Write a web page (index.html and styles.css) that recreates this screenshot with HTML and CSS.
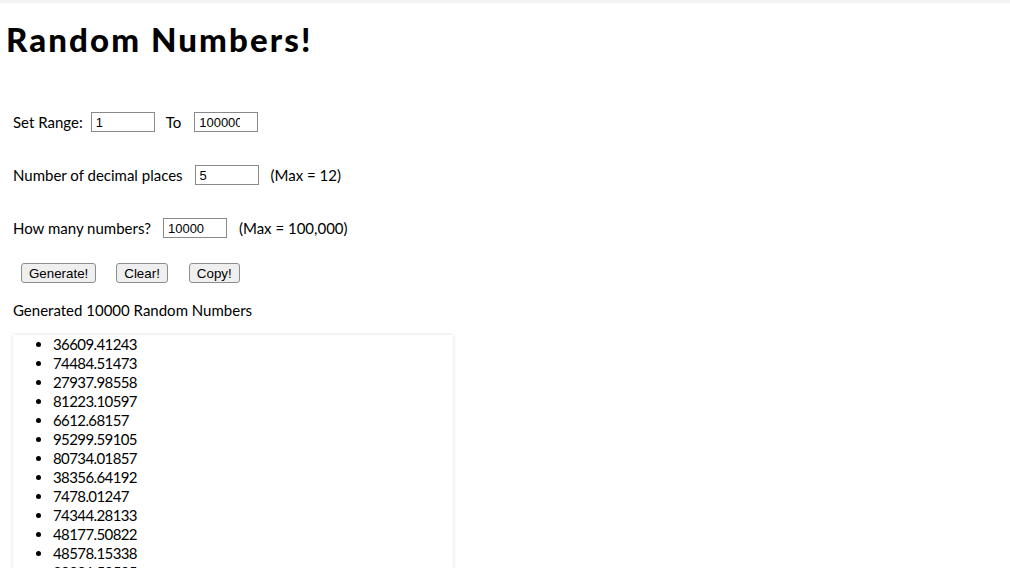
FILE: index.html
```html
<!DOCTYPE html>
<html>
<head>
<meta charset="utf-8">
<title>Random Numbers!</title>
<link rel="stylesheet" href="styles.css">
</head>
<body>
<div class="topbar"></div>
<h1 class="title">Random Numbers!</h1>
<div class="form">
  <div class="row row-range">
    <span class="label">Set Range:</span>
    <input class="field" type="text" value="1">
    <span class="label label-to">To</span>
    <input class="field" type="text" value="100000">
  </div>
  <div class="row">
    <span class="label">Number of decimal places</span>
    <input class="field" type="text" value="5">
    <span class="label">(Max = 12)</span>
  </div>
  <div class="row">
    <span class="label">How many numbers?</span>
    <input class="field" type="text" value="10000">
    <span class="label">(Max = 100,000)</span>
  </div>
  <div class="buttons">
    <button class="btn">Generate!</button>
    <button class="btn">Clear!</button>
    <button class="btn">Copy!</button>
  </div>
  <div class="status">Generated 10000 Random Numbers</div>
  <div class="results">
    <ul class="list">
      <li>36609.41243</li>
      <li>74484.51473</li>
      <li>27937.98558</li>
      <li>81223.10597</li>
      <li>6612.68157</li>
      <li>95299.59105</li>
      <li>80734.01857</li>
      <li>38356.64192</li>
      <li>7478.01247</li>
      <li>74344.28133</li>
      <li>48177.50822</li>
      <li>48578.15338</li>
      <li>30001.58505</li>
      <li>62718.33091</li>
      <li>15520.74416</li>
    </ul>
  </div>
</div>
</body>
</html>
```

FILE: styles.css
```css
html, body {
  margin: 0;
  padding: 0;
  background: #ffffff;
  color: #000000;
  font-family: "Lato", "Open Sans", sans-serif;
  overflow: hidden;
}

.topbar {
  height: 3px;
  background: #f3f3f3;
}

.title {
  margin: 0;
  padding: 16px 0 0 6px;
  font-size: 33px;
  line-height: 40px;
  font-weight: 900;
  letter-spacing: 2.1px;
}

.form {
  padding: 53px 0 0 13px;
  display: flex;
  flex-direction: column;
}

.row {
  display: flex;
  align-items: center;
  gap: 12px;
  height: 20px;
  font-size: 15px;
  margin-bottom: 33px;
}

.row-range {
  gap: 8px;
}

.label-to {
  margin: 0 5px 0 3px;
}

.field {
  box-sizing: border-box;
  width: 64px;
  height: 20px;
  margin: 0;
  padding: 1px 17px 1px 4px;
  border: 1px solid #8a8a8a;
  border-radius: 0;
  font-family: "Liberation Sans", Arial, sans-serif;
  font-size: 13px;
  color: #000;
  background: #fff;
}

.buttons {
  display: flex;
  gap: 20px;
  margin: -8px 0 0 8px;
  height: 20px;
}

.btn {
  box-sizing: border-box;
  height: 20px;
  margin: 0;
  padding: 0 7px;
  border: 1px solid #8d8d8d;
  border-radius: 3px;
  background: #efefef;
  font-family: "Liberation Sans", Arial, sans-serif;
  font-size: 13.33px;
  color: #000;
}

.btn + .btn + .btn {
  margin-left: 1px;
}

.status {
  margin-top: 18px;
  font-size: 15px;
  line-height: 19px;
}

.results {
  margin-top: 15px;
  width: 440px;
  height: 400px;
  overflow: hidden;
  background: #fff;
  box-shadow: 0 0 4px rgba(0, 0, 0, 0.13);
}

.list {
  margin: 0;
  padding-left: 40px;
  font-size: 15px;
  line-height: 19px;
  letter-spacing: -0.6px;
}
```
